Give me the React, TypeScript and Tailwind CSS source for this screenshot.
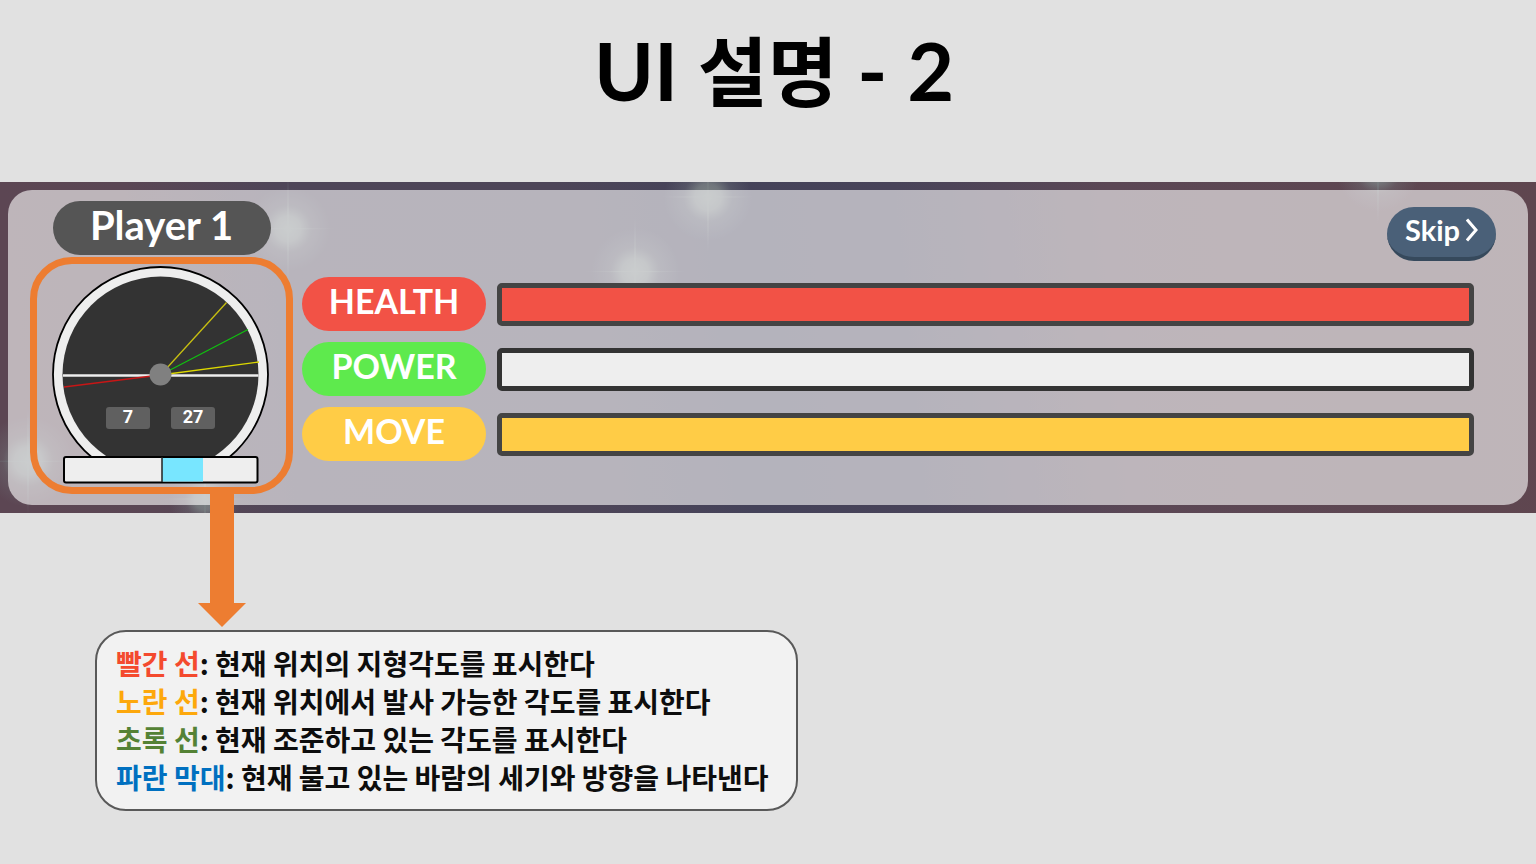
const stars = [
  { x: 708, y: 15, r: 44 },
  { x: 635, y: 90, r: 44 },
  { x: 288, y: 47, r: 42 },
  { x: 28, y: 280, r: 46 },
  { x: 205, y: 318, r: 36 },
  { x: 1378, y: -12, r: 42 },
];

function NightSky() {
  return (
    <svg className="absolute inset-0 h-full w-full" viewBox="0 0 1536 332" preserveAspectRatio="none" aria-hidden="true">
      <defs>
        <linearGradient id="sky" gradientUnits="userSpaceOnUse" x1="0" y1="0" x2="1525" y2="-150">
          <stop offset="0" stopColor="#5c4653" />
          <stop offset="0.08" stopColor="#5a4654" />
          <stop offset="0.18" stopColor="#4e4558" />
          <stop offset="0.36" stopColor="#4d4558" />
          <stop offset="0.47" stopColor="#444259" />
          <stop offset="0.58" stopColor="#484359" />
          <stop offset="0.72" stopColor="#5b4755" />
          <stop offset="1" stopColor="#5f464f" />
        </linearGradient>
        <radialGradient id="glow">
          <stop offset="0" stopColor="#7b8284" />
          <stop offset="0.3" stopColor="#7b8284" stopOpacity="0.8" />
          <stop offset="0.55" stopColor="#757c80" stopOpacity="0.3" />
          <stop offset="1" stopColor="#737a80" stopOpacity="0" />
        </radialGradient>
      </defs>
      <rect width="1536" height="332" fill="url(#sky)" />
      {stars.map((s) => (
        <g key={s.x} fill="url(#glow)">
          <circle cx={s.x} cy={s.y} r={s.r} />
          <ellipse cx={s.x} cy={s.y} rx="1.5" ry="58" />
          <ellipse cx={s.x} cy={s.y} rx="52" ry="1" />
        </g>
      ))}
    </svg>
  );
}

function AngleGauge() {
  return (
    <svg className="block h-[220px] w-[219px]" viewBox="52 265 219 220" role="img" aria-label="Angle and wind gauge">
      <circle cx="160.5" cy="374.5" r="107.5" fill="#eee" stroke="#000" strokeWidth="1.8" />
      <circle cx="160.5" cy="374.5" r="98" fill="#333" />
      <path d="M63 375.5H258.5" stroke="#eee" strokeWidth="2.6" />
      <path d="M64 387L160 375" stroke="#c81616" strokeWidth="1.4" />
      <path d="M160.5 375L226.5 302.5" stroke="#c8c010" strokeWidth="1.3" />
      <path d="M160.5 375L259 362" stroke="#dcd800" strokeWidth="1.4" />
      <path d="M160.5 375L248 329.5" stroke="#10c010" strokeWidth="1.3" />
      <circle cx="160.5" cy="374.5" r="11" fill="#808080" />
      <rect x="106" y="407" width="44" height="22" rx="3" fill="#606060" />
      <rect x="171" y="407" width="44" height="22" rx="3" fill="#606060" />
      <g className="font-['Roboto',sans-serif] font-bold" fontSize="18" fill="#fff" textAnchor="middle">
        <text x="128" y="423">7</text>
        <text x="193" y="423">27</text>
      </g>
      <rect x="64" y="457" width="193.5" height="25.5" rx="2" fill="#eee" stroke="#000" strokeWidth="2" />
      <rect x="162" y="458" width="41" height="23.5" fill="#78e6ff" />
      <path d="M162 457V482" stroke="#222" strokeWidth="1.5" />
    </svg>
  );
}

function CalloutArrow() {
  return (
    <svg className="absolute top-full left-[161px] z-10 h-[141px] w-12" viewBox="0 0 48 141" aria-hidden="true">
      <path d="M12 0H36V116H48L24 140L0 116H12Z" fill="#ed7d31" />
    </svg>
  );
}

const meters = [
  { label: "HEALTH", pill: "bg-[#f25246]", track: "border-[#444] bg-[#f25246]" },
  { label: "POWER", pill: "bg-[#5eea4d]", track: "border-[#333] bg-[#eee]" },
  { label: "MOVE", pill: "bg-[#ffcc46]", track: "border-[#444] bg-[#ffcc46]" },
];

const notes = [
  { term: "빨간 선", color: "text-[#f44a2e]", text: "현재 위치의 지형각도를 표시한다" },
  { term: "노란 선", color: "text-[#fda80c]", text: "현재 위치에서 발사 가능한 각도를 표시한다" },
  { term: "초록 선", color: "text-[#548235]", text: "현재 조준하고 있는 각도를 표시한다" },
  { term: "파란 막대", color: "text-[#0070c0]", text: "현재 불고 있는 바람의 세기와 방향을 나타낸다" },
];

export default function App() {
  return (
    <main className="min-h-screen bg-[#e1e1e1] font-['Lato','Noto_Sans_CJK_KR',sans-serif] font-bold">
      <h1 className="h-[182px] pt-[10px] pl-3 text-center text-[81px] leading-[120px] text-black">
        UI <span className="text-[76px]">설명</span> - 2
      </h1>

      <section className="relative p-2" aria-label="Player status">
        <NightSky />
        <div className="relative flex rounded-[24px] bg-white/60 py-[11px] pl-[22px]">
          <div className="flex w-[263px] shrink-0 flex-col items-center">
            <h2 className="h-[54px] w-[218px] rounded-full bg-[#555] text-center text-[40px] leading-[48px] text-white">Player 1</h2>
            <div className="relative mt-[2px] flex h-[237px] w-full justify-center rounded-[42px] border-7 border-[#ed7d31] pt-px">
              <AngleGauge />
              <CalloutArrow />
            </div>
          </div>

          <div className="ml-[9px] flex min-w-0 flex-1 flex-col">
            <button className="mt-[6px] mr-8 flex h-[54px] w-[109px] items-start justify-center gap-[6px] self-end rounded-full border-b-4 border-[#36495c] bg-[#4a6078] text-[29px] leading-[45px] text-white">
              Skip
              <svg className="mt-[11px] h-6 w-3" viewBox="0 0 12 24" fill="none" aria-hidden="true">
                <path d="M1 1.5L10 12L1 22.5" stroke="#fff" strokeWidth="3" />
              </svg>
            </button>
            <div className="mt-4 mr-[54px] flex flex-col gap-[11px]">
              {meters.map((m) => (
                <div key={m.label} className="flex items-center gap-[11px]">
                  <span className={`h-[54px] w-[184px] shrink-0 rounded-full text-center text-[34px] leading-[48px] text-white ${m.pill}`}>
                    {m.label}
                  </span>
                  <div className={`h-[43px] flex-1 rounded-[5px] border-5 ${m.track}`} />
                </div>
              ))}
            </div>
          </div>
        </div>
      </section>

      <ul className="mt-[117px] ml-[95px] w-[703px] max-w-full rounded-[31px] border-2 border-[#595959] bg-[#f2f2f2] px-[19px] pt-3 pb-[13px] font-['Noto_Sans_CJK_KR',sans-serif] text-[28px] leading-[38px] text-[#0d0d0d]">
        {notes.map((n) => (
          <li key={n.term}>
            <span className={n.color}>{n.term}</span>: {n.text}
          </li>
        ))}
      </ul>
    </main>
  );
}
